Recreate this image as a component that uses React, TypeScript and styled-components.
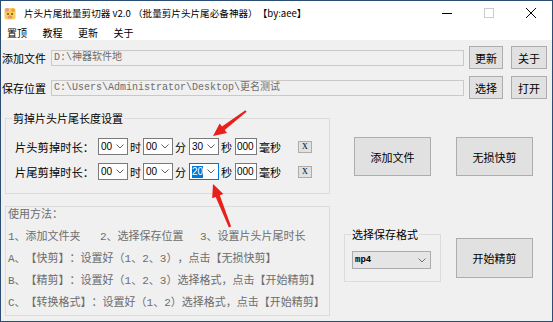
import * as React from 'react';
import styled, { createGlobalStyle } from 'styled-components';

const uiFont = `"Noto Sans CJK SC", "Liberation Sans", sans-serif`;
const songFont = `"Liberation Mono", "Noto Sans CJK SC", monospace`;

const GlobalStyle = createGlobalStyle`
    html, body {
        margin: 0;
        padding: 0;
        background: #ffffff;
    }
    body {
        font-family: ${uiFont};
        text-spacing-trim: space-all;
    }
`;

const Window = styled.div`
    position: relative;
    width: 553px;
    height: 322px;
    box-sizing: border-box;
    border: 1px solid #2b4d74;
    background: #f0f0f0;
    display: flex;
    flex-direction: column;
    overflow: hidden;
    font-family: ${uiFont};
    color: #000;
`;

const TitleBar = styled.div`
    height: 24px;
    background: #fff;
    display: flex;
    align-items: center;
    padding-left: 3px;
`;

const TitleText = styled.span`
    margin-left: 8px;
    font-size: 9.6px;
    line-height: 14px;
    white-space: pre;
`;

const Controls = styled.div`
    margin-left: auto;
    display: flex;
    height: 100%;
`;

const ControlBox = styled.div`
    width: 42px;
    height: 100%;
    display: flex;
    align-items: center;
    justify-content: center;
`;

const MenuBar = styled.div`
    height: 15px;
    background: #fff;
    display: flex;
    align-items: center;
    padding-left: 6px;
`;

const MenuItem = styled.span`
    font-size: 10px;
    line-height: 14px;
    margin-right: 15.5px;
`;

const Client = styled.div`
    flex: 1;
    display: flex;
    flex-direction: column;
    padding-top: 6px;
`;

const PathRow = styled.div<{ $gap?: number }>`
    display: flex;
    align-items: center;
    height: 23px;
    margin-top: ${p => p.$gap ?? 0}px;
`;

const PathLabel = styled.span`
    width: 49px;
    padding-left: 1px;
    font-size: 11px;
    line-height: 14px;
    white-space: nowrap;
`;

const PathInput = styled.div`
    width: 413px;
    height: 16px;
    box-sizing: border-box;
    border: 1px solid #c9c9c9;
    background: #f0f0f0;
    color: #6d6d6d;
    font-family: ${songFont};
    font-size: 10px;
    line-height: 14px;
    padding-left: 2px;
    white-space: pre;
    overflow: hidden;
`;

const Button = styled.div<{ $w: number; $h: number; $ml?: number }>`
    width: ${p => p.$w}px;
    height: ${p => p.$h}px;
    margin-left: ${p => p.$ml ?? 0}px;
    box-sizing: border-box;
    border: 1px solid #adadad;
    background: #e1e1e1;
    display: flex;
    align-items: center;
    justify-content: center;
    font-size: 11px;
    line-height: 14px;
    white-space: nowrap;
`;

const Lower = styled.div`
    display: flex;
    align-items: flex-start;
    margin-top: 19px;
`;

const LeftCol = styled.div`
    width: 325px;
    margin-left: 4px;
    display: flex;
    flex-direction: column;
`;

const GroupBox = styled.div<{ $mt?: number }>`
    border: 1px solid #dcdcdc;
    margin-top: ${p => p.$mt ?? 0}px;
`;

const Legend = styled.span<{ $ml: number }>`
    display: block;
    width: fit-content;
    margin: -8px 0 0 ${p => p.$ml}px;
    padding: 0 1px;
    background: #f0f0f0;
    font-size: 11px;
    line-height: 14px;
`;

const TimeRows = styled.div`
    display: flex;
    flex-direction: column;
    gap: 8px;
    padding: 13px 0 13px 9px;
`;

const TimeRow = styled.div`
    display: flex;
    align-items: center;
    height: 17px;
`;

const RowLabel = styled.span`
    width: 83px;
    font-size: 11.3px;
    line-height: 14px;
    white-space: nowrap;
`;

const Unit = styled.span<{ $w?: number }>`
    width: ${p => p.$w ?? 15}px;
    box-sizing: border-box;
    padding-left: 2px;
    font-size: 11px;
    line-height: 14px;
    white-space: nowrap;
`;

const ComboBox = styled.div<{ $focused?: boolean }>`
    width: 30px;
    height: 17px;
    box-sizing: border-box;
    border: 1px solid ${p => (p.$focused ? '#0078d7' : '#7a7a7a')};
    background: #fff;
    display: flex;
    align-items: center;
    justify-content: space-between;
    padding: 0 3px 0 2px;
    font-family: "Liberation Sans", sans-serif;
    font-size: 10px;
`;

const Selected = styled.span`
    background: #0078d7;
    color: #fff;
    line-height: 12px;
`;

const MsBox = styled.div`
    width: 22px;
    height: 17px;
    box-sizing: border-box;
    border: 1px solid #7a7a7a;
    background: #fff;
    padding-left: 1px;
    font-family: "Liberation Sans", sans-serif;
    font-size: 10px;
    line-height: 15px;
`;

const XButton = styled.div`
    width: 14px;
    height: 12px;
    box-sizing: border-box;
    border: 1px solid #adadad;
    background: #e1e1e1;
    display: flex;
    align-items: center;
    justify-content: center;
    font-family: "Liberation Serif", serif;
    font-size: 8px;
`;

const UsageBody = styled.div`
    display: flex;
    flex-direction: column;
    gap: 8px;
    padding: 1px 0 5px 2px;
`;

const UsageLine = styled.div`
    display: flex;
    color: #6d6d6d;
    font-family: ${songFont};
    font-size: 11px;
    line-height: 14px;
    white-space: pre;
    text-spacing-trim: space-all;
`;

const UsageCell = styled.span<{ $w?: number }>`
    width: ${p => (p.$w ? `${p.$w}px` : 'auto')};
`;

const RightPanel = styled.div`
    margin-left: 14px;
    display: grid;
    grid-template-columns: 97px 77px;
    column-gap: 15px;
    align-items: start;
`;

const Cell = styled.div<{ $mt: number; $center?: boolean }>`
    margin-top: ${p => p.$mt}px;
    display: flex;
    justify-content: ${p => (p.$center ? 'center' : 'flex-start')};
`;

const FormatGroup = styled.div`
    width: 97px;
    box-sizing: border-box;
    border: 1px solid #dcdcdc;
    padding: 0 0 12px 0;
`;

const FormatBody = styled.div`
    padding: 10px 0 0 7px;
`;

const Select = styled.div`
    width: 79px;
    height: 18px;
    box-sizing: border-box;
    border: 1px solid #acacac;
    background: #e5e5e5;
    display: flex;
    align-items: center;
    justify-content: space-between;
    padding: 0 4px 0 2px;
    font-family: "Liberation Mono", monospace;
    font-weight: bold;
    font-size: 9px;
`;

const Overlay = styled.svg`
    position: absolute;
    left: -1px;
    top: -1px;
    pointer-events: none;
`;

const Chevron = ({ color = '#606060' }: { color?: string }) => (
    <svg width="8" height="5" viewBox="0 0 8 5">
        <polyline points="0.5,0.5 4,4 7.5,0.5" fill="none" stroke={color} strokeWidth="1" />
    </svg>
);

const AppIcon = () => (
    <svg width="12" height="13" viewBox="0 0 12 13">
        <rect x="0.5" y="1" width="11" height="11.5" rx="2" fill="#f6cf58" />
        <circle cx="3" cy="3" r="2" fill="#f08fa8" />
        <circle cx="9" cy="3.2" r="1.8" fill="#f39a3c" />
        <circle cx="4" cy="7" r="1" fill="#7a4a20" />
        <circle cx="8" cy="7" r="1" fill="#7a4a20" />
        <ellipse cx="6" cy="10" rx="2.5" ry="1.5" fill="#ef8a8a" />
    </svg>
);

type Pt = [number, number];

function arrowPoints(tail : Pt, tip : Pt, headLen : number, headHalf : number, tailHalf : number, neckHalf : number) : string
{
    const dx = tip[0] - tail[0];
    const dy = tip[1] - tail[1];
    const len = Math.hypot(dx, dy);
    const ux = dx / len;
    const uy = dy / len;
    const nx = -uy;
    const ny = ux;
    const bx = tip[0] - ux * headLen;
    const by = tip[1] - uy * headLen;
    const pts : Pt[] = [
        [tail[0] + nx * tailHalf, tail[1] + ny * tailHalf],
        [bx + nx * neckHalf, by + ny * neckHalf],
        [bx + nx * headHalf, by + ny * headHalf],
        tip,
        [bx - nx * headHalf, by - ny * headHalf],
        [bx - nx * neckHalf, by - ny * neckHalf],
        [tail[0] - nx * tailHalf, tail[1] - ny * tailHalf],
    ];
    return pts.map(p => `${p[0].toFixed(1)},${p[1].toFixed(1)}`).join(' ');
}

const TimeLine = ({ label, sec, focused }: { label: string; sec: string; focused?: boolean }) => (
    <TimeRow>
        <RowLabel>{label}</RowLabel>
        <ComboBox><span>00</span><Chevron /></ComboBox>
        <Unit>时</Unit>
        <ComboBox><span>00</span><Chevron /></ComboBox>
        <Unit $w={16}>分</Unit>
        <ComboBox $focused={focused}>
            {focused ? <Selected>{sec}</Selected> : <span>{sec}</span>}
            <Chevron />
        </ComboBox>
        <Unit $w={16}>秒</Unit>
        <MsBox>000</MsBox>
        <Unit $w={41}>毫秒</Unit>
        <XButton>X</XButton>
    </TimeRow>
);

export default function App()
{
    return (
        <React.Fragment>
            <GlobalStyle />
            <Window>
                <TitleBar>
                    <AppIcon />
                    <TitleText>{'片头片尾批量剪切器 v2.0 （批量剪片头片尾必备神器）【by:aee】'}</TitleText>
                    <Controls>
                        <ControlBox>
                            <svg width="10" height="10" viewBox="0 0 10 10">
                                <line x1="0" y1="5.5" x2="10" y2="5.5" stroke="#000" strokeWidth="1" />
                            </svg>
                        </ControlBox>
                        <ControlBox>
                            <svg width="10" height="10" viewBox="0 0 10 10">
                                <rect x="0.5" y="0.5" width="9" height="9" fill="none" stroke="#cccccc" strokeWidth="1" />
                            </svg>
                        </ControlBox>
                        <ControlBox>
                            <svg width="10" height="10" viewBox="0 0 10 10">
                                <line x1="0" y1="0" x2="10" y2="10" stroke="#000" strokeWidth="1" />
                                <line x1="10" y1="0" x2="0" y2="10" stroke="#000" strokeWidth="1" />
                            </svg>
                        </ControlBox>
                    </Controls>
                </TitleBar>
                <MenuBar>
                    <MenuItem>置顶</MenuItem>
                    <MenuItem>教程</MenuItem>
                    <MenuItem>更新</MenuItem>
                    <MenuItem>关于</MenuItem>
                </MenuBar>
                <Client>
                    <PathRow>
                        <PathLabel>添加文件</PathLabel>
                        <PathInput>{'D:\\神器软件地'}</PathInput>
                        <Button $w={34} $h={23} $ml={5}>更新</Button>
                        <Button $w={36} $h={23} $ml={8}>关于</Button>
                    </PathRow>
                    <PathRow $gap={7}>
                        <PathLabel>保存位置</PathLabel>
                        <PathInput>{'C:\\Users\\Administrator\\Desktop\\更名测试'}</PathInput>
                        <Button $w={34} $h={23} $ml={5}>选择</Button>
                        <Button $w={36} $h={23} $ml={8}>打开</Button>
                    </PathRow>
                    <Lower>
                        <LeftCol>
                            <GroupBox>
                                <Legend $ml={6}>剪掉片头片尾长度设置</Legend>
                                <TimeRows>
                                    <TimeLine label="片头剪掉时长：" sec="30" />
                                    <TimeLine label="片尾剪掉时长：" sec="20" focused />
                                </TimeRows>
                            </GroupBox>
                            <GroupBox $mt={12}>
                                <UsageBody>
                                    <UsageLine>使用方法：</UsageLine>
                                    <UsageLine>
                                        <UsageCell $w={92}>1、添加文件夹</UsageCell>
                                        <UsageCell $w={100}>2、选择保存位置</UsageCell>
                                        <UsageCell>3、设置片头片尾时长</UsageCell>
                                    </UsageLine>
                                    <UsageLine>A、【快剪】：设置好（1、2、3），点击【无损快剪】</UsageLine>
                                    <UsageLine>B、【精剪】：设置好（1、2、3）选择格式，点击【开始精剪】</UsageLine>
                                    <UsageLine>C、【转换格式】：设置好（1、2）选择格式，点击【开始精剪】</UsageLine>
                                </UsageBody>
                            </GroupBox>
                        </LeftCol>
                        <RightPanel>
                            <Cell $mt={19} $center>
                                <Button $w={77} $h={39}>添加文件</Button>
                            </Cell>
                            <Cell $mt={19}>
                                <Button $w={77} $h={39}>无损快剪</Button>
                            </Cell>
                            <Cell $mt={58}>
                                <FormatGroup>
                                    <Legend $ml={6}>选择保存格式</Legend>
                                    <FormatBody>
                                        <Select>
                                            <span>mp4</span>
                                            <Chevron color="#707070" />
                                        </Select>
                                    </FormatBody>
                                </FormatGroup>
                            </Cell>
                            <Cell $mt={62}>
                                <Button $w={77} $h={40}>开始精剪</Button>
                            </Cell>
                        </RightPanel>
                    </Lower>
                </Client>
                <Overlay width="553" height="322" viewBox="0 0 553 322">
                    <polygon points={arrowPoints([246, 111], [213, 136], 13, 6, 1, 2.2)} fill="#e8201c" />
                    <polygon points={arrowPoints([230, 227], [213, 184], 13, 6, 1.2, 2.2)} fill="#e8201c" />
                </Overlay>
            </Window>
        </React.Fragment>
    );
}
